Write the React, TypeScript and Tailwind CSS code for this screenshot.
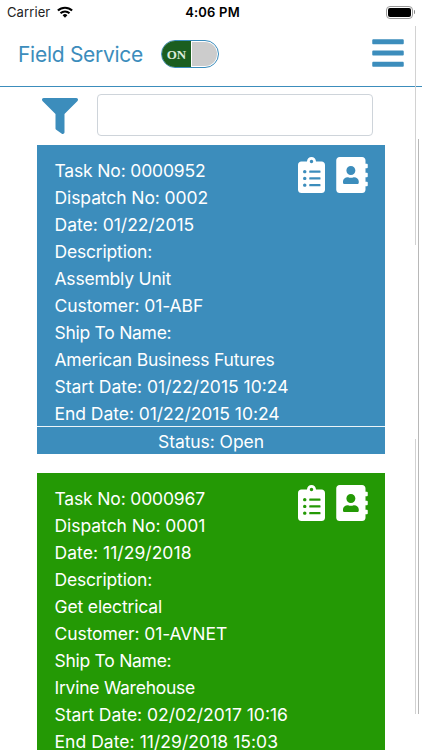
import { FaAddressBook, FaBars, FaClipboardList, FaFilter } from "react-icons/fa";

type Line = { text: string; tracking: string };
type Task = { color: string; lines: Line[]; status: string };

const tasks: Task[] = [
  {
    color: "bg-[#3c8dbc]",
    lines: [
      { text: "Task No: 0000952", tracking: "tracking-[-0.16px]" },
      { text: "Dispatch No: 0002", tracking: "tracking-[-0.09px]" },
      { text: "Date: 01/22/2015", tracking: "tracking-normal" },
      { text: "Description:", tracking: "tracking-[-0.18px]" },
      { text: "Assembly Unit", tracking: "tracking-[-0.2px]" },
      { text: "Customer: 01-ABF", tracking: "tracking-[-0.08px]" },
      { text: "Ship To Name:", tracking: "tracking-[-0.27px]" },
      { text: "American Business Futures", tracking: "tracking-[-0.2px]" },
      { text: "Start Date: 01/22/2015 10:24", tracking: "tracking-normal" },
      { text: "End Date: 01/22/2015 10:24", tracking: "tracking-[-0.04px]" },
    ],
    status: "Status: Open",
  },
  {
    color: "bg-[#249905]",
    lines: [
      { text: "Task No: 0000967", tracking: "tracking-[-0.16px]" },
      { text: "Dispatch No: 0001", tracking: "tracking-[-0.04px]" },
      { text: "Date: 11/29/2018", tracking: "tracking-[0.05px]" },
      { text: "Description:", tracking: "tracking-[-0.18px]" },
      { text: "Get electrical", tracking: "tracking-[-0.14px]" },
      { text: "Customer: 01-AVNET", tracking: "tracking-[-0.08px]" },
      { text: "Ship To Name:", tracking: "tracking-[-0.27px]" },
      { text: "Irvine Warehouse", tracking: "tracking-[-0.24px]" },
      { text: "Start Date: 02/02/2017 10:16", tracking: "tracking-normal" },
      { text: "End Date: 11/29/2018 15:03", tracking: "tracking-[0.05px]" },
    ],
    status: "Status: Open",
  },
];

function StatusBar() {
  return (
    <div className="grid h-6 grid-cols-3 items-center pl-[7px] pr-[7px] text-[13px] leading-6 text-black">
      <div className="flex items-center gap-[7px]">
        <span className="tracking-[0.1px] text-[#222]">Carrier</span>
        <svg width="16" height="12" viewBox="0 0 16 12" fill="none" stroke="#000" strokeWidth="2.1">
          <path d="M0.9 4.6a10.1 10.1 0 0 1 14.2 0" />
          <path d="M3.5 7.3a6.4 6.4 0 0 1 9 0" />
          <path d="M8 11.7 5.6 9.2a3.5 3.5 0 0 1 4.8 0Z" fill="#000" stroke="none" />
        </svg>
      </div>
      <span className="whitespace-nowrap pl-[3px] text-center font-semibold tracking-[0.2px]">4:06 PM</span>
      <div className="flex items-center justify-end gap-px">
        <div className="h-[13px] w-[27px] rounded-[4px] border border-[#999] p-px">
          <div className="h-full rounded-[2px] bg-black" />
        </div>
        <div className="h-1 w-[1.5px] rounded-r bg-[#888]" />
      </div>
    </div>
  );
}

function Header() {
  return (
    <header className="flex h-[63px] items-center border-b border-[#3c8dbc] pb-0.5 pl-[18px] pr-[18px] text-[#3c8dbc]">
      <h1 className="w-[143px] whitespace-nowrap pt-0.5 text-[21px] leading-7 tracking-[-0.28px]">Field Service</h1>
      <div className="flex h-7 w-[58px] overflow-hidden rounded-full border border-[#3c8dbc] bg-white">
        <div className="flex w-[29px] items-center justify-center bg-[#1b5e20] pt-0.5 font-['Liberation_Serif',serif] text-[13px] font-bold text-[#dcebdc]">
          ON
        </div>
        <div className="my-px ml-px mr-px flex-1 rounded-r-full bg-[#ccc]" />
      </div>
      <FaBars className="mb-[3px] ml-auto h-9 w-8" />
    </header>
  );
}

function TaskCard({ task }: { task: Task }) {
  return (
    <article className={`${task.color} h-[309px] text-[17.5px] leading-[27px] text-white`}>
      <div className="flex h-[282px] justify-between border-b border-white/90 pl-[17.5px] pr-[17px] pt-3">
        <div className="whitespace-nowrap">
          {task.lines.map((line) => (
            <p key={line.text} className={line.tracking}>
              {line.text}
            </p>
          ))}
        </div>
        <div className="-ml-20 flex shrink-0 gap-[11px]">
          <FaClipboardList className="h-9 w-[27px]" />
          <FaAddressBook className="h-9 w-8" />
        </div>
      </div>
      <p className="pt-px text-center leading-[27px] tracking-[-0.08px]">{task.status}</p>
    </article>
  );
}

export default function App() {
  return (
    <div className="relative h-[750px] w-[422px] overflow-hidden bg-white font-['Inter',sans-serif]">
      <StatusBar />
      <Header />
      <main className="pl-[37px] pr-[37px]">
        <div className="flex h-[58px] items-start pl-[5px] pt-[7px]">
          <FaFilter className="mt-1 size-9 text-[#3c8dbc]" />
          <input
            aria-label="Filter tasks"
            className="ml-[19px] h-[42px] w-[276px] rounded-[4px] border border-[#ced4da] bg-white px-3"
          />
        </div>
        <div className="flex flex-col gap-[19px]">
          {tasks.map((task) => (
            <TaskCard key={task.lines[0].text} task={task} />
          ))}
        </div>
      </main>
      <div className="absolute left-[415px] top-[26px] h-[219px] w-px bg-[#d2d2d2]" />
      <div className="absolute left-[415px] top-[439px] h-[275px] w-px bg-[#d2d2d2]" />
      <div className="absolute left-[418px] top-[139px] h-[575px] w-px bg-[#b8b8b8]" />
    </div>
  );
}
